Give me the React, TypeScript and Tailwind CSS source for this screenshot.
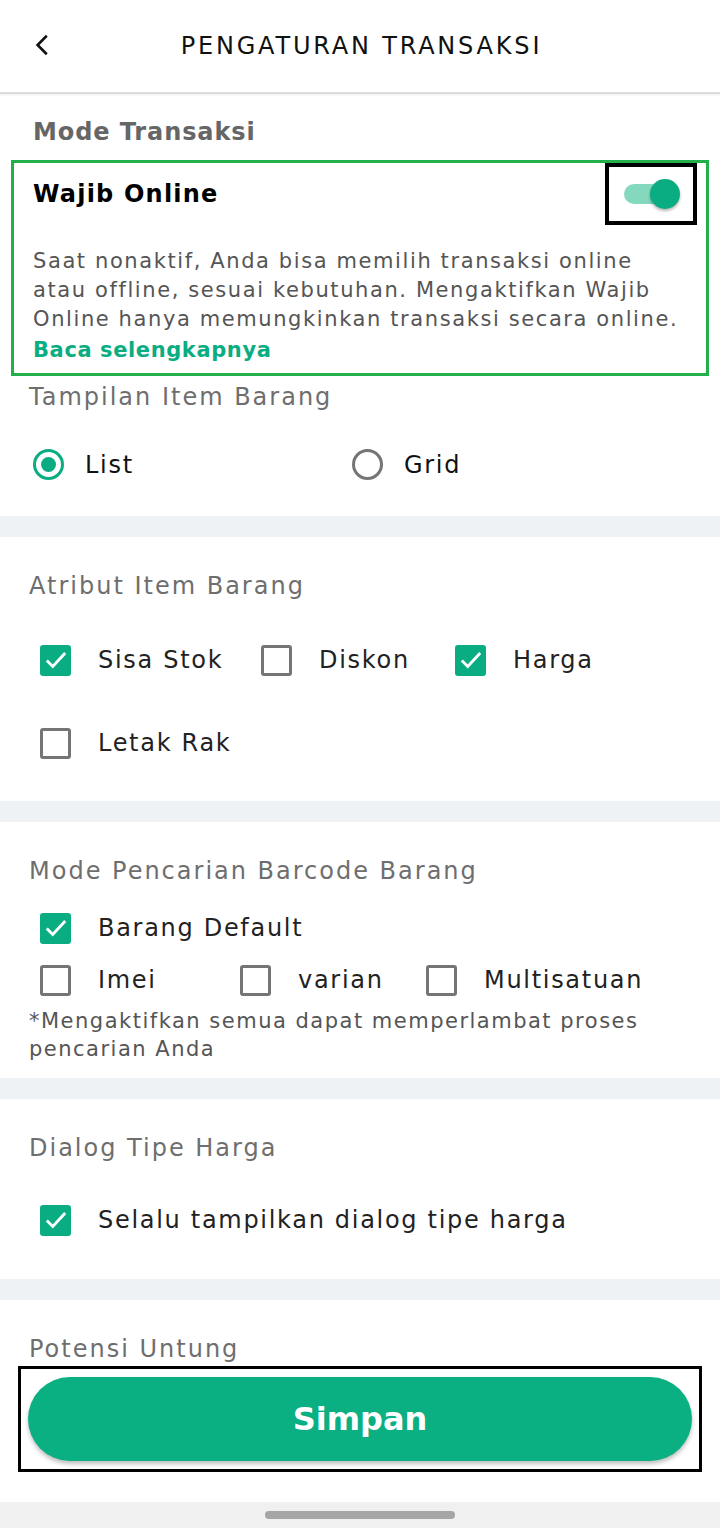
import React, { useState } from 'react';

const font = { fontFamily: '"DejaVu Sans", "Noto Sans", sans-serif' };

function CheckBox({ checked }: { checked: boolean }) {
  if (checked) {
    return (
      <span className="flex h-[31px] w-[31px] shrink-0 items-center justify-center rounded-[3px] bg-[#0aad82]">
        <svg width="26" height="26" viewBox="0 0 24 24" fill="none">
          <path d="M3.5 12.5l5.5 5.5L20.5 5.5" stroke="white" strokeWidth="2.6" />
        </svg>
      </span>
    );
  }
  return <span className="h-[31px] w-[31px] shrink-0 rounded-[3px] border-[3px] border-[#757575]" />;
}

function Check({ label, checked, className = '' }: { label: string; checked: boolean; className?: string }) {
  return (
    <div className={'flex items-center gap-[27px] ' + className}>
      <CheckBox checked={checked} />
      <span className="text-[24px] leading-[32px] tracking-[1.7px] text-[#222]">{label}</span>
    </div>
  );
}

function Radio({ label, checked }: { label: string; checked: boolean }) {
  return (
    <div className="flex items-center gap-[21px]">
      <span
        className={
          'flex h-[31px] w-[31px] items-center justify-center rounded-full border-[3px] ' +
          (checked ? 'border-[#0aad82]' : 'border-[#757575]')
        }
      >
        {checked && <span className="h-[15px] w-[15px] rounded-full bg-[#0aad82]" />}
      </span>
      <span className="text-[24px] leading-[32px] tracking-[1.7px] text-[#111]">{label}</span>
    </div>
  );
}

function SectionTitle({ children }: { children: React.ReactNode }) {
  return <div className="text-[24px] leading-[32px] tracking-[2px] text-[#6e6e6e]">{children}</div>;
}

function Band() {
  return <div className="h-[21px] bg-[#eff2f5]" />;
}

export default function App() {
  const [online, setOnline] = useState(true);

  return (
    <div className="flex h-[1528px] w-[720px] flex-col bg-white" style={font}>
      {/* Header */}
      <div className="relative flex h-[94px] shrink-0 items-center justify-center border-b-2 border-[#dcdcdc] shadow-[0_1px_2px_rgba(0,0,0,0.08)]">
        <button className="absolute left-[26px] top-[28px] p-1">
          <svg width="26" height="26" viewBox="0 0 24 24" fill="none">
            <path d="M15.5 3.5L7 12l8.5 8.5" stroke="#111" strokeWidth="2.4" />
          </svg>
        </button>
        <h1 className="pl-[3px] text-[24px] tracking-[2.8px] text-[#111]">PENGATURAN TRANSAKSI</h1>
      </div>

      {/* Mode transaksi */}
      <div className="px-[33px] pt-[21px] text-[24px] font-bold leading-[34px] tracking-[0.9px] text-[#666]">
        Mode Transaksi
      </div>
      <div className="mx-[11px] mt-[11px] border-[3px] border-[#22b04b] pb-[7px] pl-[19px] pr-[9px]">
        <div className="flex items-start justify-between">
          <div className="pt-[14px] text-[24px] font-bold leading-[34px] tracking-[1.2px] text-black">Wajib Online</div>
          <button
            onClick={() => setOnline(!online)}
            className="flex h-[62px] w-[92px] items-center justify-center border-4 border-black"
          >
            <span className="relative block h-[20px] w-[54px] rounded-full bg-[#84d8be]">
              <span
                className={
                  'absolute top-[-5px] h-[30px] w-[30px] rounded-full bg-[#0aad82] shadow-[0_2px_3px_rgba(0,0,0,0.3)] ' +
                  (online ? 'right-[-2px]' : 'left-[-2px]')
                }
              />
            </span>
          </button>
        </div>
        <p className="mt-[22px] text-[21px] leading-[29px] tracking-[1.6px] text-[#555]">
          Saat nonaktif, Anda bisa memilih transaksi online
          <br />
          atau offline, sesuai kebutuhan. Mengaktifkan Wajib
          <br />
          Online hanya memungkinkan transaksi secara online.
        </p>
        <div className="pt-[1px] text-[21px] font-bold leading-[31px] tracking-[0.6px] text-[#0aad82]">
          Baca selengkapnya
        </div>
      </div>

      {/* Tampilan */}
      <div className="px-[29px] pt-[5px]">
        <SectionTitle>Tampilan Item Barang</SectionTitle>
        <div className="flex h-[103px] items-center pl-[4px]">
          <div className="w-[319px]">
            <Radio label="List" checked />
          </div>
          <Radio label="Grid" checked={false} />
        </div>
      </div>
      <Band />

      {/* Atribut */}
      <div className="px-[29px] pt-[33px]">
        <SectionTitle>Atribut Item Barang</SectionTitle>
        <div className="flex items-center pl-[11px] pt-[42px]">
          <Check label="Sisa Stok" checked className="w-[221px]" />
          <Check label="Diskon" checked={false} className="w-[194px]" />
          <Check label="Harga" checked />
        </div>
        <div className="pb-[42px] pl-[11px] pt-[51px]">
          <Check label="Letak Rak" checked={false} />
        </div>
      </div>
      <Band />

      {/* Barcode */}
      <div className="px-[29px] pt-[33px]">
        <SectionTitle>Mode Pencarian Barcode Barang</SectionTitle>
        <div className="pl-[11px] pt-[25px]">
          <Check label="Barang Default" checked />
        </div>
        <div className="flex items-center pl-[11px] pt-[20px]">
          <Check label="Imei" checked={false} className="w-[200px]" />
          <Check label="varian" checked={false} className="w-[186px]" />
          <Check label="Multisatuan" checked={false} />
        </div>
        <p className="pb-[15px] pt-[11px] text-[21px] leading-[28px] tracking-[1.5px] text-[#555]">
          *Mengaktifkan semua dapat memperlambat proses
          <br />
          pencarian Anda
        </p>
      </div>
      <Band />

      {/* Dialog tipe harga */}
      <div className="px-[29px] pt-[33px]">
        <SectionTitle>Dialog Tipe Harga</SectionTitle>
        <div className="pb-[43px] pl-[11px] pt-[40px]">
          <Check label="Selalu tampilkan dialog tipe harga" checked />
        </div>
      </div>
      <Band />

      {/* Potensi untung + button */}
      <div className="flex-1 px-[29px] pt-[33px]">
        <SectionTitle>Potensi Untung</SectionTitle>
      </div>
      <div className="mx-[18px] mb-[30px] mt-[-120px] border-[3px] border-black px-[7px] py-[8px]">
        <button className="flex h-[84px] w-full items-center justify-center rounded-full bg-[#0aaf82] text-[32px] font-bold text-white shadow-[0_3px_4px_rgba(0,0,0,0.25)]">
          Simpan
        </button>
      </div>

      {/* Nav bar */}
      <div className="flex h-[26px] shrink-0 items-center justify-center bg-[#f0f0f0]">
        <span className="h-[8px] w-[190px] rounded-full bg-[#a6a6a6]" />
      </div>
    </div>
  );
}
